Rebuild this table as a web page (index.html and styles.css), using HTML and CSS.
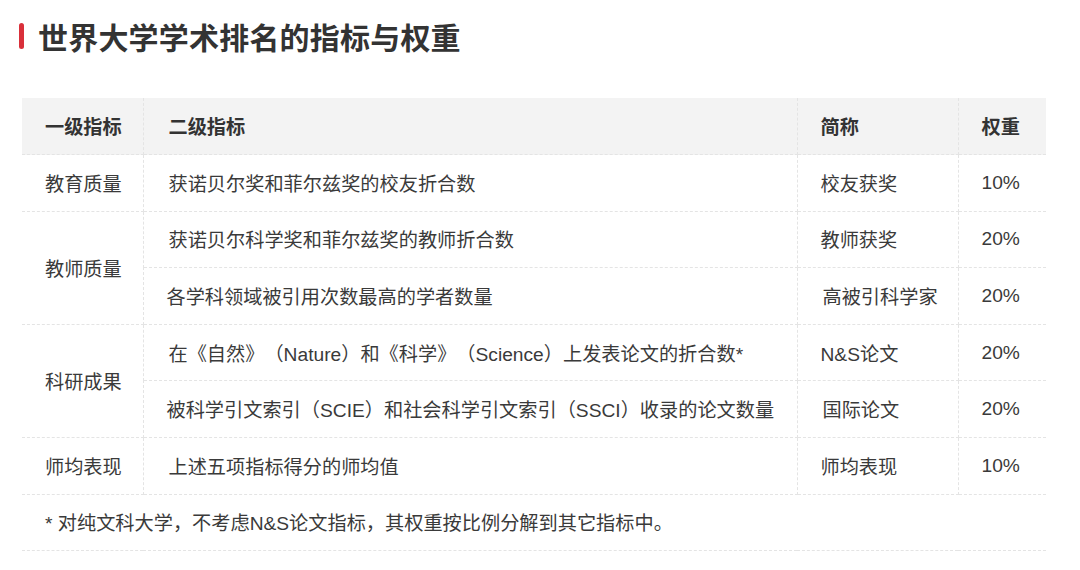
FILE: index.html
```html
<!DOCTYPE html>
<html lang="zh-CN">
<head>
<meta charset="utf-8">
<title>世界大学学术排名的指标与权重</title>
<link rel="stylesheet" href="styles.css">
</head>
<body>
<div class="page">
  <h1 class="title"><span class="mark"></span>世界大学学术排名的指标与权重</h1>
  <table class="rank">
    <colgroup>
      <col class="c1"><col class="c2"><col class="c3"><col class="c4">
    </colgroup>
    <thead>
      <tr><th>一级指标</th><th>二级指标</th><th>简称</th><th>权重</th></tr>
    </thead>
    <tbody>
      <tr><td>教育质量</td><td>获诺贝尔奖和菲尔兹奖的校友折合数</td><td>校友获奖</td><td>10%</td></tr>
      <tr><td rowspan="2">教师质量</td><td>获诺贝尔科学奖和菲尔兹奖的教师折合数</td><td>教师获奖</td><td>20%</td></tr>
      <tr><td>各学科领域被引用次数最高的学者数量</td><td>高被引科学家</td><td>20%</td></tr>
      <tr><td rowspan="2">科研成果</td><td>在《自然》（Nature）和《科学》（Science）上发表论文的折合数*</td><td>N&amp;S论文</td><td>20%</td></tr>
      <tr><td>被科学引文索引（SCIE）和社会科学引文索引（SSCI）收录的论文数量</td><td>国际论文</td><td>20%</td></tr>
      <tr><td>师均表现</td><td>上述五项指标得分的师均值</td><td>师均表现</td><td>10%</td></tr>
      <tr class="note"><td colspan="4">* 对纯文科大学，不考虑N&amp;S论文指标，其权重按比例分解到其它指标中。</td></tr>
    </tbody>
  </table>
</div>
</body>
</html>
```

FILE: styles.css
```css
* { box-sizing: border-box; }
html, body { margin: 0; padding: 0; background: #fff; }
body {
  font-family: "Liberation Sans", "Noto Sans CJK SC", sans-serif;
  color: #333;
  text-spacing-trim: space-all;
}
.page {
  width: 1080px;
  height: 570px;
  padding: 20px 34px 0 22px;
}
.title {
  display: flex;
  align-items: center;
  margin: 0 0 46px -3px;
  height: 32px;
  font-family: "Noto Sans CJK SC", sans-serif;
  font-size: 30px;
  font-weight: 700;
  color: #333;
  letter-spacing: 0.2px;
  line-height: 32px;
}
.mark {
  display: inline-block;
  width: 5px;
  height: 26px;
  border-radius: 3px;
  background: #d9303a;
  margin-right: 14px;
}
.rank {
  width: 1024px;
  border-collapse: collapse;
  font-size: 19.2px;
  table-layout: fixed;
}
.c1 { width: 121px; }
.c2 { width: 654px; }
.c3 { width: 161px; }
.c4 { width: 88px; }
.rank th, .rank td {
  height: 56.6px;
  padding: 0 0 0 23px;
  text-align: left;
  vertical-align: middle;
  border-bottom: 1px dashed #e4e4e4;
  border-right: 1px dashed #e4e4e4;
  white-space: nowrap;
  color: #3a3a3a;
  text-spacing-trim: space-all;
}
.rank th:last-child, .rank td:last-child { border-right: none; }
.rank tr:nth-child(2) td:first-child,
.rank tr:nth-child(4) td:first-child { border-right: 1px dashed #e4e4e4; }
.rank tr:nth-child(3) td:last-child,
.rank tr:nth-child(5) td:last-child { border-right: none; }
.rank th {
  background: #f3f3f3;
  font-weight: 700;
  color: #333;
}
.rank td:nth-child(2), .rank th:nth-child(2) { padding-left: 25px; }
.rank tr.note td { border-right: none; }
```
